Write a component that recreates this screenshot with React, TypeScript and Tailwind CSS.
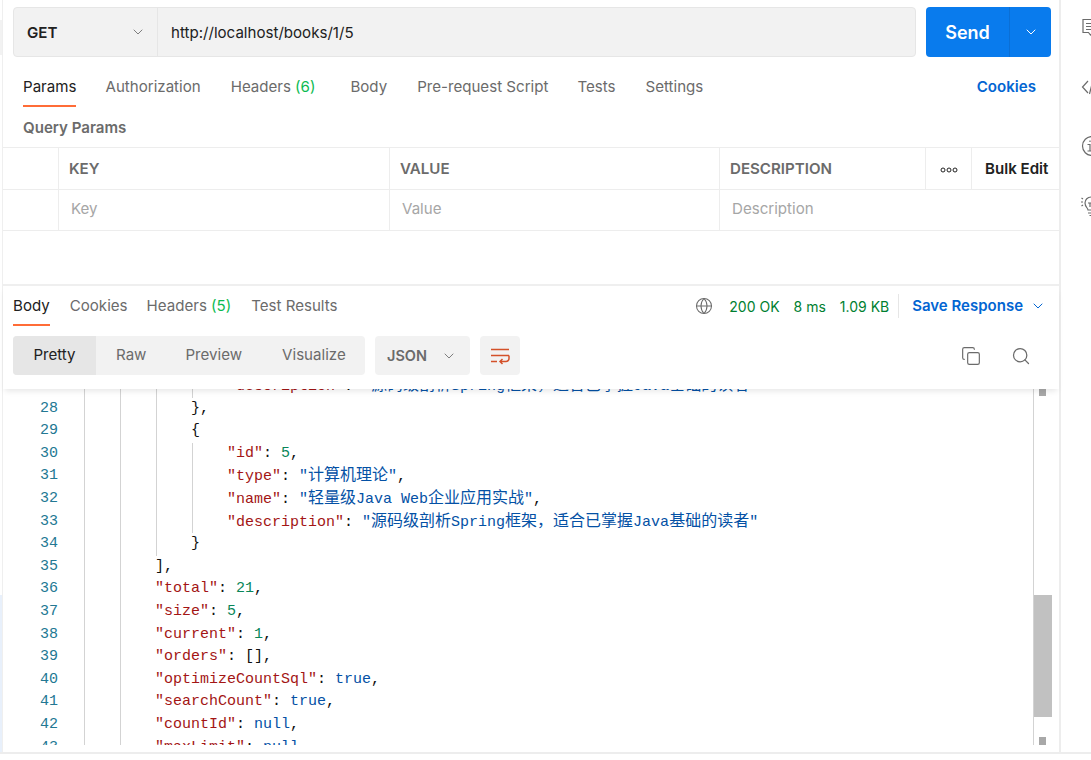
import { ChevronDown, Copy, Globe, Search } from "lucide-react";

type Tok = [string, string];

const KEY = "text-[#a31515]";
const STR = "text-[#0451a5]";
const NUM = "text-[#098658]";
const PUN = "text-[#111111]";

const codeLines: { n: number; depth: number; guides: number; toks: Tok[] }[] = [
  { n: 27, depth: 4, guides: 4, toks: [['"description"', KEY], [": ", PUN], ['"源码级剖析Spring框架，适合已掌握Java基础的读者"', STR]] },
  { n: 28, depth: 3, guides: 3, toks: [["},", PUN]] },
  { n: 29, depth: 3, guides: 3, toks: [["{", PUN]] },
  { n: 30, depth: 4, guides: 4, toks: [['"id"', KEY], [": ", PUN], ["5", NUM], [",", PUN]] },
  { n: 31, depth: 4, guides: 4, toks: [['"type"', KEY], [": ", PUN], ['"计算机理论"', STR], [",", PUN]] },
  { n: 32, depth: 4, guides: 4, toks: [['"name"', KEY], [": ", PUN], ['"轻量级Java Web企业应用实战"', STR], [",", PUN]] },
  { n: 33, depth: 4, guides: 4, toks: [['"description"', KEY], [": ", PUN], ['"源码级剖析Spring框架，适合已掌握Java基础的读者"', STR]] },
  { n: 34, depth: 3, guides: 3, toks: [["}", PUN]] },
  { n: 35, depth: 2, guides: 2, toks: [["],", PUN]] },
  { n: 36, depth: 2, guides: 2, toks: [['"total"', KEY], [": ", PUN], ["21", NUM], [",", PUN]] },
  { n: 37, depth: 2, guides: 2, toks: [['"size"', KEY], [": ", PUN], ["5", NUM], [",", PUN]] },
  { n: 38, depth: 2, guides: 2, toks: [['"current"', KEY], [": ", PUN], ["1", NUM], [",", PUN]] },
  { n: 39, depth: 2, guides: 2, toks: [['"orders"', KEY], [": [],", PUN]] },
  { n: 40, depth: 2, guides: 2, toks: [['"optimizeCountSql"', KEY], [": ", PUN], ["true", STR], [",", PUN]] },
  { n: 41, depth: 2, guides: 2, toks: [['"searchCount"', KEY], [": ", PUN], ["true", STR], [",", PUN]] },
  { n: 42, depth: 2, guides: 2, toks: [['"countId"', KEY], [": ", PUN], ["null", STR], [",", PUN]] },
  { n: 43, depth: 2, guides: 2, toks: [['"maxLimit"', KEY], [": ", PUN], ["null", STR]] },
];

function CodeText({ text, color }: { text: string; color: string }) {
  // the CJK runs sit wider than the mono cells in the reference
  return (
    <span className={color}>
      {text.split(/([\u4e00-\u9fff，]+)/).map((part, i) =>
        i % 2 ? (
          <span key={i} className="text-[16px]">
            {part}
          </span>
        ) : (
          part
        ),
      )}
    </span>
  );
}

function CodeRow({ n, depth, guides, toks }: (typeof codeLines)[number]) {
  return (
    <div className="flex h-[22.6px] leading-[22.6px] whitespace-pre">
      <div className="w-[58px] shrink-0 text-right text-[#237893]">{n}</div>
      <div className="w-[26px] shrink-0" />
      {Array.from({ length: depth }).map((_, i) => (
        <span
          key={i}
          className={i < guides ? "w-[36px] shrink-0 border-l border-[#d3d3d3]" : "w-[36px] shrink-0"}
        />
      ))}
      <span className="-ml-px">
        {toks.map(([text, color], i) => (
          <CodeText key={i} text={text} color={color} />
        ))}
      </span>
    </div>
  );
}

function Tab({ label, count, active, className }: { label: string; count?: string; active?: boolean; className?: string }) {
  return (
    <div className={`relative flex h-full items-center text-[15.1px] ${active ? "text-[#212121]" : "text-[#6b6b6b]"} ${className ?? ""}`}>
      {label}
      {count && <span className="ml-1 text-[#0cbb52]">({count})</span>}
      {active && <div className="absolute bottom-0 left-0 right-0 h-[2px] bg-[#ff6c37]" />}
    </div>
  );
}

function HeadCell({ children, className }: { children?: React.ReactNode; className?: string }) {
  return (
    <div className={`flex items-center border-r border-[#ededed] pt-[2px] text-[15.1px] font-semibold text-[#6b6b6b] ${className ?? ""}`}>
      {children}
    </div>
  );
}

function ValueCell({ children }: { children?: React.ReactNode }) {
  return (
    <div className="flex items-center border-r border-[#ededed] pb-px pl-3 text-[15.1px] text-[#a6a6a6]">
      {children}
    </div>
  );
}

function SideIcons() {
  return (
    <div className="flex w-[30px] shrink-0 flex-col gap-[39px] overflow-hidden pl-[20px] pt-[18px] text-[#6b6b6b]">
      <svg className="shrink-0" width="20" height="20" viewBox="0 0 20 20" fill="none" stroke="currentColor" strokeWidth="1.2">
        <path d="M2 1.5h14.5v13h-5L9.5 17l-2-2.5H2z" />
        <path d="M5 5.5h8.500M5 8.500h8.500M5 11.500h5" />
      </svg>
      <svg className="shrink-0" width="20" height="20" viewBox="0 0 20 20" fill="none" stroke="currentColor" strokeWidth="1.2">
        <path d="M7 4 1.500 10 7 16M12 3 8.500 17M13.500 4l5 6-5 6" />
      </svg>
      <svg className="shrink-0" width="20" height="20" viewBox="0 0 20 20" fill="none" stroke="currentColor" strokeWidth="1.200">
        <circle cx="11" cy="10" r="9.500" />
        <path d="M6.500 8.500h2.500V15M6.500 15h5M9 4.500v1.500" />
      </svg>
      <svg className="mt-px shrink-0" width="20" height="20" viewBox="0 0 20 20" fill="none" stroke="currentColor" strokeWidth="1.200">
        <path d="M0 6h2M.500 2l1.500 1M.500 10l1.500-1" />
        <path d="M7 14c0-2-3-3-3-7a6 6 0 0 1 12 0c0 4-3 5-3 7z" />
        <path d="M7 17h6M8.500 19.500h3M9 7v4M7 7h4" />
      </svg>
    </div>
  );
}

export default function App() {
  return (
    <div className="flex h-[760px] w-[1091px] flex-col overflow-hidden bg-white font-['Inter',sans-serif]">
      <div className="flex h-[752px] shrink-0">
        <div className="flex w-[3px] shrink-0 flex-col border-r border-[#efefef]">
          <div className="h-[20px]" />
          <div className="h-[35px] bg-[#f2f2f2]" />
          <div className="h-[540px]" />
          <div className="flex-1 bg-[#e8f0fb]" />
        </div>

        <div className="flex w-[1056px] shrink-0 flex-col">
          <div className="flex h-[64px] shrink-0 gap-[10px] pl-[10px] pr-2 pt-[7px]">
            <div className="flex h-[50px] w-[903px] rounded border border-[#e6e6e6] bg-[#f2f2f2]">
              <div className="flex w-[144px] items-center justify-between border-r border-[#e6e6e6] pl-[13px] pr-[11px] text-[15.1px] font-semibold text-[#212121]">
                <span className="pt-[2px]">GET</span>
                <ChevronDown size={16} strokeWidth={1.3} className="text-[#6b6b6b]" />
              </div>
              <div className="flex items-center pl-[13px] pt-[2px] text-[15.1px] text-[#212121]">http://localhost/books/1/5</div>
            </div>
            <div className="flex h-[50px] w-[125px] rounded bg-[#097bed] text-white">
              <div className="flex w-[84px] items-center justify-center border-r border-[#0a6fd6] text-[18px] font-semibold">Send</div>
              <div className="flex flex-1 items-center justify-center">
                <ChevronDown size={16} strokeWidth={1.5} />
              </div>
            </div>
          </div>

          <div className="flex h-[43px] shrink-0 items-center pl-5 pr-[23px] pt-[3px]">
            <Tab label="Params" active />
            <Tab label="Authorization" className="ml-[29px]" />
            <Tab label="Headers" count="6" className="ml-[30px]" />
            <Tab label="Body" className="ml-[35px]" />
            <Tab label="Pre-request Script" className="ml-[30px]" />
            <Tab label="Tests" className="ml-[29px]" />
            <Tab label="Settings" className="ml-[30px]" />
            <div className="ml-auto text-[15.1px] font-semibold text-[#0265d2]">Cookies</div>
          </div>

          <div className="flex h-[40px] shrink-0 items-center pl-5 pt-[3px] text-[15.1px] font-semibold text-[#6b6b6b]">Query Params</div>

          <div className="grid h-[84px] shrink-0 grid-cols-[56px_331px_330px_206px_46px_87px] grid-rows-[41px_41px] border-y border-[#ededed]">
            <HeadCell />
            <HeadCell className="pl-[10px]">KEY</HeadCell>
            <HeadCell className="pl-[10px]">VALUE</HeadCell>
            <HeadCell className="pl-[10px]">DESCRIPTION</HeadCell>
            <HeadCell className="justify-center">
              <svg width="18" height="6" viewBox="0 0 18 6" fill="none" stroke="#212121" strokeWidth="1">
                <circle cx="3" cy="3" r="2" />
                <circle cx="9" cy="3" r="2" />
                <circle cx="15" cy="3" r="2" />
              </svg>
            </HeadCell>
            <div className="flex items-center pl-[13px] pt-[2px] text-[15.1px] font-semibold text-[#212121]">Bulk Edit</div>
            <div className="col-span-6 grid grid-cols-[56px_331px_330px_339px] border-t border-[#ededed]">
              <ValueCell />
              <ValueCell>Key</ValueCell>
              <ValueCell>Value</ValueCell>
              <div className="flex items-center pb-px pl-3 text-[15.1px] text-[#a6a6a6]">Description</div>
            </div>
          </div>

          <div className="h-[55px] shrink-0 border-b-2 border-[#efefef]" />

          <div className="relative z-10 flex h-[103px] shrink-0 flex-col bg-white shadow-[0_4px_6px_-2px_rgba(0,0,0,0.10)]">
            <div className="flex h-[40px] shrink-0 items-center pl-[10px] pr-[13px]">
              <Tab label="Body" active />
              <Tab label="Cookies" className="ml-5" />
              <Tab label="Headers" count="5" className="ml-[19px]" />
              <Tab label="Test Results" className="ml-5" />
              <div className="ml-auto flex items-center text-[14px] text-[#007f31]">
                <Globe size={18} strokeWidth={1.4} className="text-[#6b6b6b]" />
                <span className="ml-4">200 OK</span>
                <span className="ml-[14px]">8 ms</span>
                <span className="ml-[14px]">1.09 KB</span>
                <div className="ml-[9px] h-6 w-px bg-[#e6e6e6]" />
                <span className="ml-[13px] text-[15px] font-semibold text-[#0265d2]">Save Response</span>
                <ChevronDown size={16} strokeWidth={1.5} className="ml-[7px] text-[#0265d2]" />
              </div>
            </div>
            <div className="flex items-start pl-[10px] pr-[28px] pt-[10px]">
              <div className="flex h-[39px] w-[352px] items-center rounded bg-[#f2f2f2] text-[15.1px] text-[#6b6b6b]">
                <div className="flex h-full w-[83px] items-center justify-center rounded-l bg-[#e6e6e6] text-[#212121]">Pretty</div>
                <span className="ml-5">Raw</span>
                <span className="ml-[39px]">Preview</span>
                <span className="ml-[40px]">Visualize</span>
              </div>
              <div className="ml-[10px] flex h-[39px] w-[95px] items-center justify-between rounded bg-[#f2f2f2] pl-3 pr-[13px] text-[14.5px] font-semibold text-[#6b6b6b]">
                JSON
                <ChevronDown size={16} strokeWidth={1.3} />
              </div>
              <div className="ml-[10px] flex h-[39px] w-10 items-center justify-center rounded bg-[#f2f2f2]">
                <svg width="20" height="20" viewBox="0 0 20 20" fill="none" stroke="#d4512a" strokeWidth="1.500">
                  <path d="M1 3.500h18M1 9.500h18M1 15.500h6" />
                  <path d="M19 9.500v3a3 3 0 0 1-3 3h-6M12.500 13l-2.500 2.500 2.500 2.500" />
                </svg>
              </div>
              <div className="ml-auto flex h-[39px] items-center gap-[30px] text-[#6b6b6b]">
                <Copy size={20} strokeWidth={1.4} />
                <Search size={20} strokeWidth={1.5} />
              </div>
            </div>
          </div>

          <div className="flex h-[356px] shrink-0 overflow-hidden pr-2 font-['Liberation_Mono','Noto_Sans_CJK_SC',monospace] text-[15px]">
            <div className="min-w-0 flex-1 -translate-x-[3px]">
              <div className="mt-[-14px]">
                {codeLines.map((line) => (
                  <CodeRow key={line.n} {...line} />
                ))}
              </div>
            </div>
            <div className="flex w-[18px] shrink-0 flex-col items-center border-l border-[#d3d3d3]">
              <div className="h-[7px] w-[7px] bg-[#a8a8a8]" />
              <div className="h-[199px]" />
              <div className="h-[122px] w-[18px] shrink-0 bg-[#c1c1c1]" />
              <div className="h-[20px]" />
              <div className="h-[8px] w-[7px] bg-[#a8a8a8]" />
            </div>
          </div>
        </div>

        <div className="w-[2px] shrink-0 bg-[#ededed]" />
        <SideIcons />
      </div>
      <div className="h-[2px] shrink-0 bg-[#ededed]" />
    </div>
  );
}
